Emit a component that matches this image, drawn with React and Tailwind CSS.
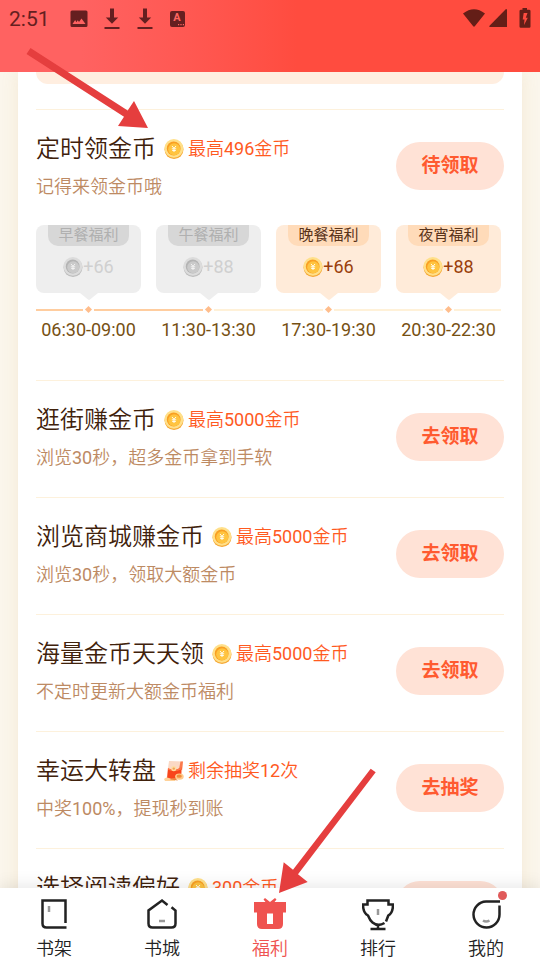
const meals = [
  { name: "早餐福利", amount: 66, time: "06:30-09:00", passed: true },
  { name: "午餐福利", amount: 88, time: "11:30-13:30", passed: true },
  { name: "晚餐福利", amount: 66, time: "17:30-19:30", passed: false },
  { name: "夜宵福利", amount: 88, time: "20:30-22:30", passed: false },
];

const tasks = [
  { title: "定时领金币", reward: "最高496金币", text: "记得来领金币哦", action: "待领取", meals },
  { title: "逛街赚金币", reward: "最高5000金币", text: "浏览30秒，超多金币拿到手软", action: "去领取" },
  { title: "浏览商城赚金币", reward: "最高5000金币", text: "浏览30秒，领取大额金币", action: "去领取" },
  { title: "海量金币天天领", reward: "最高5000金币", text: "不定时更新大额金币福利", action: "去领取" },
  { title: "幸运大转盘", reward: "剩余抽奖12次", text: "中奖100%，提现秒到账", action: "去抽奖", packet: true },
  { title: "选择阅读偏好", reward: "300金币" },
];

function Coin({ muted }) {
  const c = muted
    ? { edge: "#bdbdbd", rim: "#dcdcdc", ring: "#b3b3b3", face: "#cacaca", mark: "#f2f2f2" }
    : { edge: "#f5a733", rim: "#ffe08a", ring: "#f99f22", face: "#ffc440", mark: "#fffdf0" };
  return (
    <svg viewBox="0 0 20 20" className="size-5 shrink-0" aria-hidden="true">
      <circle cx="10" cy="10.500" r="9.500" fill={c.edge} />
      <circle cx="9.900" cy="9.400" r="9.400" fill={c.rim} />
      <circle cx="9.700" cy="9.500" r="6.900" fill={c.ring} />
      <circle cx="10.200" cy="10.200" r="6" fill={c.face} />
      <path d="M8 7 10 9.300l2-2.300M7.800 9.800h4.400M8.200 11.500h3.600M10 9.300v3.700" stroke={c.mark} strokeWidth="1" fill="none" />
    </svg>
  );
}

function RedPacket() {
  return (
    <svg viewBox="0 0 20 20" className="size-5 shrink-0" aria-hidden="true">
      <path d="M5 0 19 .5 17.5 17 2.5 18z" fill="#fbd9c5" />
      <path d="M16.500 .5 19 .5 18 9l-3-1z" fill="#fb7a4c" />
      <path d="M4 7.500Q10 10.500 17.500 6.500L17 17.500 3 18z" fill="#f8451c" />
      <path d="M4 7Q10 10.500 17.500 6.500L17.200 8.500Q10 11.500 3.800 8.500z" fill="#ff7445" />
      <circle cx="9.8" cy="7.6" r="2.6" fill="#ffdca0" />
      <circle cx="9.8" cy="7.6" r="1.2" fill="#f0a05a" />
      <ellipse cx="15.4" cy="15.6" rx="4.300" ry="3.200" fill="#ffc98a" />
      <ellipse cx="15.2" cy="15.2" rx="2.600" ry="1.600" fill="#f28c3a" />
      <path d="M0 18q2-2.500 5-1t6 1.500v1.500H1z" fill="#ffd29a" />
      <path d="M6 18.500q4-3 8 1z" fill="#e8843a" />
    </svg>
  );
}

function DownloadIcon() {
  return (
    <svg viewBox="0 0 16 22" className="h-[22px] w-4" fill="currentColor" aria-hidden="true">
      <path d="M6 .5h4v9h4.200L8 15.700 1.800 9.500H6zM.5 19h15v2H.5z" />
    </svg>
  );
}

function StatusBar() {
  return (
    <header className="flex h-[72px] shrink-0 items-start justify-between bg-linear-to-r from-[#ff6261] from-15% via-[#ff5852] via-35% to-[#ff4c3f] to-55% pr-[9px] pl-[9px]">
      <div className="flex h-[38px] items-center text-[#651f20]">
        <span className="text-[21px] leading-9">2:51</span>
        <svg viewBox="0 0 18 18" className="ml-5 size-[18px]" fill="currentColor" aria-hidden="true">
          <path fillRule="evenodd" d="M2 .5h14q1.500 0 1.500 1.500v13.500q0 1.500-1.500 1.500H2Q.5 17 .5 15.500V2Q.5.500 2 .5zM2.500 14h13l-4-5.500-2.500 3.500-1.200-1.700-1.500 2L5.200 10z" />
        </svg>
        <div className="ml-4 flex gap-[17px]">
          <DownloadIcon />
          <DownloadIcon />
        </div>
        <div className="ml-[17px] flex h-4 w-[15px] flex-col items-center rounded-xs bg-[#651f20] text-[#ff6661]">
          <span className="text-[11px] leading-[13px] font-bold">A</span>
          <svg viewBox="0 0 6 2" className="mr-px h-0.5 w-1.5 self-end" fill="currentColor" aria-hidden="true">
            <path d="M0 0h1.200v1.200H0zM2.400 0h1.200v1.200H2.400zM4.800 0H6v1.200H4.800z" />
          </svg>
        </div>
      </div>
      <div className="flex h-[35px] items-center text-[#641e17]">
        <svg viewBox="0 0 22 20" className="h-5 w-[22px]" fill="currentColor" aria-hidden="true">
          <path d="M0 5.500Q11-3.200 22 5.500L12 18q-1 1.500-2 0z" />
        </svg>
        <svg viewBox="0 0 18 18" className="ml-1 size-[18px]" fill="currentColor" aria-hidden="true">
          <path d="M17 0q1 0 1 1v17H1q-1 0-.7-1z" />
        </svg>
        <svg viewBox="0 0 12 20" className="ml-3 h-5 w-3" fill="currentColor" aria-hidden="true">
          <path fillRule="evenodd" d="M3.500 0h4.500v1.800h2q1.500 0 1.500 1.200v15.500q0 1.200-1.200 1.200H1.700Q.5 19.700.5 18.500V3q0-1.200 1.500-1.200h1.500zM4.700 5 3.700 11.500h1.800L5 17l3.800-7.200H6.800L8.500 5z" />
        </svg>
      </div>
    </header>
  );
}

function Meals({ items }) {
  return (
    <ul className="mb-[38px] grid grid-cols-4 gap-[15px] pr-[3px]">
      {items.map((m, i) => {
        const next = items[i + 1];
        return (
          <li key={m.name} className="flex flex-col items-center">
            <div className={`flex h-[68px] w-full flex-col items-center rounded-lg ${m.passed ? "bg-[#eeeeee]" : "bg-[#ffebd9]"}`}>
              <span
                className={`h-[21px] w-[81px] rounded-b-[10px] text-center text-[15px] leading-5 ${
                  m.passed ? "bg-[#d7d7d7] text-[#b0b0b0]" : "bg-[#ffdbb9] text-[#59331a]"
                }`}
              >
                {m.name}
              </span>
              <span className={`mt-[9px] flex h-6 items-center text-lg leading-6 ${m.passed ? "text-[#d0d0d0]" : "text-[#9a3f0c]"}`}>
                <Coin muted={m.passed} />+{m.amount}
              </span>
            </div>
            <svg viewBox="0 0 18 7" className={`h-[7px] w-[18px] ${m.passed ? "text-[#eeeeee]" : "text-[#ffebd9]"}`} fill="currentColor" aria-hidden="true">
              <path d="M0 0h18l-8 6.500q-1 .8-2 0z" />
            </svg>
            <div className="mt-[7px] flex h-[5px] w-full items-center">
              <span className={`h-0.5 flex-1 ${m.passed ? "bg-[#ffcd9f]" : "bg-[#fff1d8]"}`} />
              <span className="mx-[3px] size-[5px] rotate-45 bg-[#ffbd8c]" />
              <span className={`h-0.5 flex-1 ${next ? "shadow-[15px_0_0_0]" : ""} ${next?.passed ? "bg-[#ffcd9f] shadow-[#ffcd9f]" : "bg-[#fff1d8] shadow-[#fff1d8]"}`} />
            </div>
            <span className="mt-[6px] text-lg leading-6 text-[#765013]">{m.time}</span>
          </li>
        );
      })}
    </ul>
  );
}

function Task({ task }) {
  return (
    <li className="border-t border-[#fdf1dc]">
      <div className={`flex items-start justify-between ${task.meals ? "pb-[26px]" : "pb-[27px]"}`}>
        <div className="font-['Roboto','Noto_Sans_CJK_SC_DemiLight','Noto_Sans_CJK_SC',sans-serif]">
          <div className="mt-[21px] flex h-9 items-center">
            <h2 className="text-2xl leading-9 font-[350] text-[#40210b]">{task.title}</h2>
            <span className="ml-2 flex items-center gap-1 text-lg leading-6 text-[#ff5a1f]">
              {task.packet ? <RedPacket /> : <Coin />}
              {task.reward}
            </span>
          </div>
          {task.text && <p className="mt-2 text-lg leading-6 text-[#bd8a63]">{task.text}</p>}
        </div>
        <button
          type="button"
          aria-label={task.action ? undefined : task.title}
          className="mt-8 h-12 w-[108px] rounded-full bg-[#ffe2d6] text-[19px] leading-6 font-bold text-[#ff5a30]"
        >
          {task.action}
        </button>
      </div>
      {task.meals && <Meals items={task.meals} />}
    </li>
  );
}

const tabs = [
  {
    label: "书架",
    icon: (
      <>
        <path d="M27.500 27V4.500H4.500v23q0 4 4 4h20" />
        <path d="M11 10v6" stroke="#999" strokeWidth="2.500" />
      </>
    ),
  },
  {
    label: "书城",
    icon: (
      <>
        <path d="m21.500 9-5.500-4.500L2.500 14.500v13q0 4 4 4h19q4 0 4-4V14.500l-4-3.200" />
        <path d="M13 25h6" stroke="#999" strokeWidth="2.500" />
      </>
    ),
  },
  {
    label: "福利",
    active: true,
    icon: (
      <path
        d="M0 6h11.500L9.500 3.500 11 2l5 4 5-4 1.500 1.500L20.500 6H32v10.500h-3V28q0 5-5 5H8q-5 0-5-5V16.500H0zM13 17.500v10.500h6V17.500z"
        fill="currentColor"
        fillRule="evenodd"
        stroke="none"
      />
    ),
  },
  {
    label: "排行",
    icon: (
      <>
        <path d="M22.500 27Q16 31 10.500 26.500 8 24.500 6 19.500 1 17 1 8.500h4.500V4.500h21v4H31Q31 17 26.300 19.500l-2.300 6M16 29v4M8.500 33h15" />
        <path d="M16 13v6" stroke="#999" strokeWidth="2.500" />
      </>
    ),
  },
  {
    label: "我的",
    dot: true,
    icon: (
      <>
        <path d="M30 5.500H16A13 13 0 1 0 29.500 18.500V9.500" />
        <path d="M13 24.500q3 2 6.500 0" stroke="#999" strokeWidth="2.500" />
      </>
    ),
  },
];

function TabBar() {
  return (
    <nav className="relative grid h-[72px] shrink-0 grid-cols-5 bg-white shadow-[0_-2px_16px_rgba(0,0,0,0.1)]">
      {tabs.map((t) => (
        <a key={t.label} href="#" className={`flex flex-col items-center pt-2 ${t.active ? "text-[#ef5350]" : "text-[#222222]"}`}>
          <span className="relative">
            <svg viewBox="0 0 32 36" className="h-9 w-8" fill="none" stroke="currentColor" strokeWidth="2.500" aria-hidden="true">
              {t.icon}
            </svg>
            {t.dot && <span className="absolute -top-[5px] -right-[5px] size-[9px] rounded-full bg-[#e05a5a]" />}
          </span>
          <span className="mt-[5px] text-lg leading-6 font-[350]">{t.label}</span>
        </a>
      ))}
    </nav>
  );
}

export default function App() {
  return (
    <div className="relative flex h-screen flex-col overflow-hidden bg-[#fbf6ec] font-['Roboto','Noto_Sans_CJK_SC',sans-serif]">
      <StatusBar />
      <main className="min-h-0 flex-1 overflow-hidden px-[18px]">
        <div className="min-h-full bg-white px-[18px] shadow-[0_0_16px_rgba(200,160,80,0.15)]">
          <div className="mb-[25px] h-3 rounded-b-xl bg-[#ffeee0]" />
          <ul>
            {tasks.map((t) => (
              <Task key={t.title} task={t} />
            ))}
          </ul>
        </div>
      </main>
      <TabBar />
      {/* pointers to the timed reward and the welfare tab */}
      <svg viewBox="0 0 122 82" className="pointer-events-none absolute top-12 left-[26px] h-[82px] w-[122px] text-[#e53e3e]" fill="currentColor" aria-hidden="true">
        <path d="M4.500 0 101.700 62.500 108 53l14 27-30-2 6-9.300L.5 6z" />
      </svg>
      <svg viewBox="0 0 98 126" className="pointer-events-none absolute bottom-[66px] left-1/2 ml-[8px] h-[126px] w-[98px] text-[#e53e3e]" fill="currentColor" aria-hidden="true">
        <path d="M92.700 .7 97.700 4.300 20 106.300l9.700 7.700L1 125 5.700 94.300l9.300 7.500z" />
      </svg>
    </div>
  );
}
